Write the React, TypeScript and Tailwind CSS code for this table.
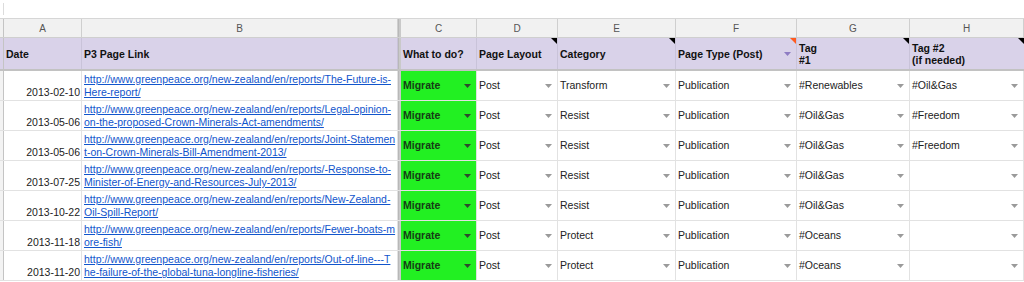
import React from 'react';

const base = 'http://www.greenpeace.org/new-zealand/en/reports/';

const rows = [
  { date: '2013-02-10', link: [base + 'The-Future-is-', 'Here-report/'], cat: 'Transform', tag1: '#Renewables', tag2: '#Oil&Gas' },
  { date: '2013-05-06', link: [base + 'Legal-opinion-', 'on-the-proposed-Crown-Minerals-Act-amendments/'], cat: 'Resist', tag1: '#Oil&Gas', tag2: '#Freedom' },
  { date: '2013-05-06', link: [base + 'Joint-Statemen', 't-on-Crown-Minerals-Bill-Amendment-2013/'], cat: 'Resist', tag1: '#Oil&Gas', tag2: '#Freedom' },
  { date: '2013-07-25', link: [base + '-Response-to-', 'Minister-of-Energy-and-Resources-July-2013/'], cat: 'Resist', tag1: '#Oil&Gas', tag2: '' },
  { date: '2013-10-22', link: [base + 'New-Zealand-', 'Oil-Spill-Report/'], cat: 'Resist', tag1: '#Oil&Gas', tag2: '' },
  { date: '2013-11-18', link: [base + 'Fewer-boats-m', 'ore-fish/'], cat: 'Protect', tag1: '#Oceans', tag2: '' },
  { date: '2013-11-20', link: [base + 'Out-of-line---T', 'he-failure-of-the-global-tuna-longline-fisheries/'], cat: 'Protect', tag1: '#Oceans', tag2: '' },
];

// small dropdown caret used by data-validation cells
const Caret = ({ color = '#9a9a9a' }: { color?: string }) => (
  <svg width="7" height="4" viewBox="0 0 7 4" className="shrink-0">
    <path d="M0 0 L7 0 L3.5 4 Z" fill={color} />
  </svg>
);

// comment marker in the top-right corner of a header cell
const Note = ({ color = '#000' }: { color?: string }) => (
  <svg width="6" height="6" viewBox="0 0 6 6" className="absolute top-0 right-0">
    <path d="M0 0 L6 0 L6 6 Z" fill={color} />
  </svg>
);

const Drop = ({ w, text, green }: { w: string; text: string; green?: boolean }) => (
  <div
    className={`${w} shrink-0 h-full flex items-center justify-between pl-[2px] pr-[5px] border-r border-[#e2e2e2] ${
      green ? 'bg-[#22f022] font-bold text-[#163d16]' : 'text-[#222]'
    }`}
  >
    <span className="whitespace-nowrap">{text}</span>
    <Caret color={green ? '#2e4a2e' : '#9a9a9a'} />
  </div>
);

const Sep = () => <div className="w-[3px] shrink-0 h-full bg-[#c9c9c9] border-l border-[#b8b8b8]" />;

const Stub = ({ bg = 'bg-[#f3f3f3]' }: { bg?: string }) => (
  <div className={`w-[4px] shrink-0 h-full ${bg} border-r border-[#c4c4c4]`} />
);

export default function App() {
  return (
    <div className="w-[1024px] h-[282px] overflow-hidden bg-white text-[10.5px] leading-[13px] font-['Liberation_Sans',Arial,sans-serif]">
      {/* formula bar remnant */}
      <div className="h-[19px] border-b border-[#d6d6d6] pl-[3px] pt-[3px]">
        <div className="w-px h-[12px] bg-[#dcdcdc]" />
      </div>

      {/* column letters */}
      <div className="h-[19px] flex bg-[#f1f1f1] text-[#555] text-[10px] border-b border-[#cfcfcf]">
        <Stub bg="bg-[#f1f1f1]" />
        {[
          ['A', 'w-[78px]'],
          ['B', 'w-[316px]'],
        ].map(([l, w]) => (
          <div key={l} className={`${w} shrink-0 flex items-center justify-center border-r border-[#cfcfcf]`}>{l}</div>
        ))}
        <Sep />
        {[
          ['C', 'w-[76px]'],
          ['D', 'w-[81px]'],
          ['E', 'w-[118px]'],
          ['F', 'w-[121px]'],
          ['G', 'w-[113px]'],
          ['H', 'flex-1'],
        ].map(([l, w]) => (
          <div key={l} className={`${w} shrink-0 flex items-center justify-center border-r border-[#cfcfcf]`}>{l}</div>
        ))}
      </div>

      {/* header row */}
      <div className="h-[33px] flex bg-[#d9d2e9] font-bold text-[#111] leading-[12px] border-b-2 border-[#c2c2c2]">
        <Stub bg="bg-[#d9d2e9]" />
        <div className="w-[78px] shrink-0 flex items-center pl-[2px] border-r border-[#c9c3d9]">Date</div>
        <div className="w-[316px] shrink-0 flex items-center pl-[2px] border-r border-[#c9c3d9]">P3 Page Link</div>
        <Sep />
        <div className="w-[76px] shrink-0 flex items-center pl-[2px] border-r border-[#c9c3d9]">What to do?</div>
        <div className="relative w-[81px] shrink-0 flex items-center pl-[2px] border-r border-[#c9c3d9]">
          Page Layout
          <Note />
        </div>
        <div className="relative w-[118px] shrink-0 flex items-center pl-[2px] border-r border-[#c9c3d9]">
          Category
          <Note />
        </div>
        <div className="relative w-[121px] shrink-0 flex items-center justify-between pl-[2px] pr-[5px] border-r border-[#c9c3d9]">
          <span>Page Type (Post)</span>
          <Caret color="#8e7cc3" />
          <Note color="#ff5a1f" />
        </div>
        <div className="relative w-[113px] shrink-0 flex items-center pl-[2px] border-r border-[#c9c3d9]">
          <span>
            Tag
            <br />
            #1
          </span>
          <Note />
        </div>
        <div className="relative flex-1 flex items-center pl-[2px]">
          <span>
            Tag #2
            <br />
            (if needed)
          </span>
          <Note />
        </div>
      </div>

      {/* data rows */}
      {rows.map((r, i) => (
        <div key={i} className="h-[30px] flex border-b border-[#e2e2e2]">
          <Stub />
          <div className="w-[78px] shrink-0 h-full flex items-end justify-end pr-[1px] pb-px text-[#222] border-r border-[#e2e2e2]">
            {r.date}
          </div>
          <div className="w-[316px] shrink-0 h-full flex flex-col justify-end pl-[2px] pb-px text-[#1155cc] underline border-r border-[#e2e2e2]">
            <span className="whitespace-nowrap">{r.link[0]}</span>
            <span className="whitespace-nowrap">{r.link[1]}</span>
          </div>
          <Sep />
          <Drop w="w-[76px]" text="Migrate" green />
          <Drop w="w-[81px]" text="Post" />
          <Drop w="w-[118px]" text={r.cat} />
          <Drop w="w-[121px]" text="Publication" />
          <Drop w="w-[113px]" text={r.tag1} />
          <Drop w="flex-1" text={r.tag2} />
        </div>
      ))}
    </div>
  );
}
